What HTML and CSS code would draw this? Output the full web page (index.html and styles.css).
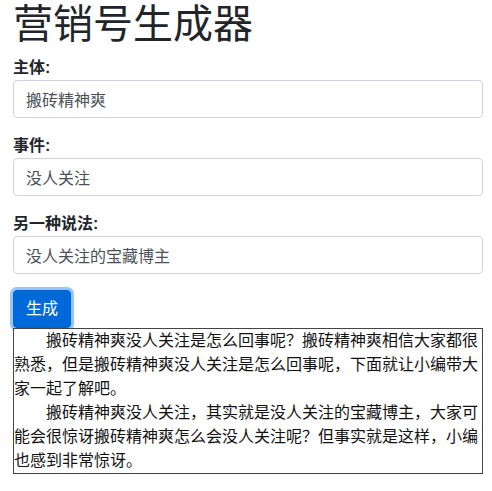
FILE: index.html
```html
<!DOCTYPE html>
<html lang="zh-CN">
<head>
    <meta charset="UTF-8">
    <meta name="viewport" content="width=device-width, initial-scale=1.0">
    <title>营销号生成器</title>
    <link rel="stylesheet" href="styles.css">
</head>
<body>
    <div class="container">
        <h1>营销号生成器</h1>

        <div class="form-group">
            <label for="subject">主体:</label>
            <input id="subject" class="form-control" type="text" value="搬砖精神爽">
        </div>

        <div class="form-group">
            <label for="event">事件:</label>
            <input id="event" class="form-control" type="text" value="没人关注">
        </div>

        <div class="form-group">
            <label for="alias">另一种说法:</label>
            <input id="alias" class="form-control" type="text" value="没人关注的宝藏博主">
        </div>

        <button id="generate" class="btn btn-primary is-focused">生成</button>

        <div id="output" class="output">
            <p>搬砖精神爽没人关注是怎么回事呢？搬砖精神爽相信大家都很熟悉，但是搬砖精神爽没人关注是怎么回事呢，下面就让小编带大家一起了解吧。</p>
            <p>搬砖精神爽没人关注，其实就是没人关注的宝藏博主，大家可能会很惊讶搬砖精神爽怎么会没人关注呢？但事实就是这样，小编也感到非常惊讶。</p>
        </div>
    </div>
</body>
</html>
```

FILE: styles.css
```css
body {
    margin: 0;
    font-family: "Liberation Sans", "Noto Sans CJK SC", sans-serif;
    font-size: 16px;
    line-height: 1.5;
    color: #212529;
    background: #fff;
}

.container {
    padding: 0 9px 0 13px;
}

h1 {
    margin: 0 0 8px;
    font-size: 40px;
    font-weight: 400;
    line-height: 1.2;
}

.form-group {
    margin-bottom: 16px;
}

.form-group label {
    display: block;
    font-weight: 700;
}

.form-control {
    display: block;
    width: 100%;
    height: 38px;
    padding: 6px 12px;
    font-family: inherit;
    font-size: 16px;
    line-height: 1.5;
    color: #495057;
    background: #fff;
    border: 1px solid #ced4da;
    border-radius: 4px;
    box-sizing: border-box;
}

.btn {
    display: block;
    padding: 6px 12px;
    font-family: inherit;
    font-size: 16px;
    line-height: 1.5;
    border: 1px solid transparent;
    border-radius: 4px;
    cursor: pointer;
}

.btn-primary {
    color: #fff;
    background: #007bff;
    border-color: #007bff;
}

.btn-primary.is-focused,
.btn-primary:focus {
    background: #0069d9;
    border-color: #0062cc;
    box-shadow: 0 0 0 3px rgba(38, 143, 255, 0.5);
    outline: none;
}

.output {
    position: relative;
    background: #fff;
    border: 1px solid #444;
    color: #111;
}

.output p {
    margin: 0;
    text-indent: 2em;
}
```
